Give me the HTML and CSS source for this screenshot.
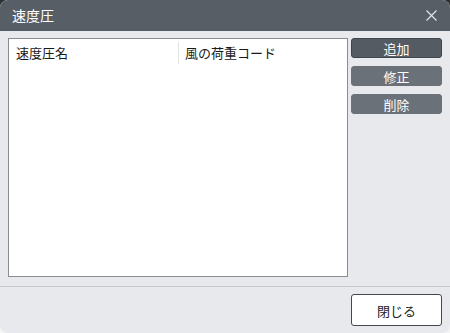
FILE: index.html
```html
<!DOCTYPE html>
<html lang="ja">
<head>
<meta charset="utf-8">
<link rel="stylesheet" href="styles.css">
</head>
<body>
<div class="window">
  <div class="titlebar">
    <span class="title">速度圧</span>
    <svg class="close" width="11" height="11" viewBox="0 0 11 11"><path d="M0.5 0.5L10.5 10.5M10.5 0.5L0.5 10.5" stroke="#e6e8ea" stroke-width="1.1" fill="none"/></svg>
  </div>
  <div class="main">
    <div class="list">
      <div class="list-head">
        <div class="col col1">速度圧名</div>
        <div class="col col2">風の荷重コード</div>
      </div>
    </div>
    <div class="side">
      <button class="btn btn-primary">追加</button>
      <button class="btn btn-muted">修正</button>
      <button class="btn btn-muted">削除</button>
    </div>
  </div>
  <div class="footer">
    <button class="btn-close">閉じる</button>
  </div>
</div>
</body>
</html>
```
FILE: styles.css
```css
html {
  background: linear-gradient(#2e2f31 0 50%, #f5f5f6 50% 100%);
}
body {
  margin: 0;
  width: 450px;
  height: 333px;
  font-family: "Noto Sans CJK JP", "Noto Sans", sans-serif;
}
.window {
  width: 450px;
  height: 333px;
  background: #e8e9ed;
  border-radius: 8px;
  overflow: hidden;
  display: flex;
  flex-direction: column;
}
.titlebar {
  height: 31px;
  background: #585e66;
  display: flex;
  align-items: center;
  justify-content: space-between;
  padding: 0 12px 0 12px;
  flex-shrink: 0;
}
.title {
  color: #ffffff;
  font-size: 14px;
  line-height: 1;
  margin-top: -1px;
}
.close {
  margin-right: 1px;
  margin-top: 0px;
}
.main {
  display: flex;
  gap: 3px;
  padding: 7px 8px 0 8px;
  height: 239px;
}
.list {
  width: 340px;
  height: 239px;
  box-sizing: border-box;
  background: #ffffff;
  border: 1px solid #8b8d92;
}
.list-head {
  display: flex;
  height: 26px;
  align-items: center;
  font-size: 13px;
  color: #1a1a1a;
}
.col {
  line-height: 1;
}
.col1 {
  width: 162px;
  padding-left: 7px;
  height: 22px;
  display: flex;
  align-items: center;
  border-right: 1px solid #e3e3e3;
  margin-top: 1px;
}
.col2 {
  padding-left: 6px;
  margin-top: 0px;
}
.side {
  display: flex;
  flex-direction: column;
  gap: 8px;
  padding-top: 0px;
}
.btn {
  width: 91px;
  height: 20px;
  border-radius: 3px;
  font-family: "Noto Sans CJK JP", sans-serif;
  font-size: 13px;
  line-height: 1;
  color: #ffffff;
  padding: 0;
  cursor: pointer;
}
.btn-primary {
  background: #545b63;
  border: 1px solid #3f454c;
}
.btn-muted {
  background: #6b7179;
  border: 1px solid #6b7179;
}
.footer {
  margin-top: 9px;
  border-top: 1px solid #c8c9cc;
  display: flex;
  justify-content: flex-end;
  padding: 7px 8px 0 0;
}
.btn-close {
  width: 91px;
  height: 32px;
  background: #ffffff;
  border: 1px solid #44484e;
  border-radius: 3px;
  font-family: "Noto Sans CJK JP", sans-serif;
  font-size: 13px;
  color: #222;
  padding: 0;
}
```
